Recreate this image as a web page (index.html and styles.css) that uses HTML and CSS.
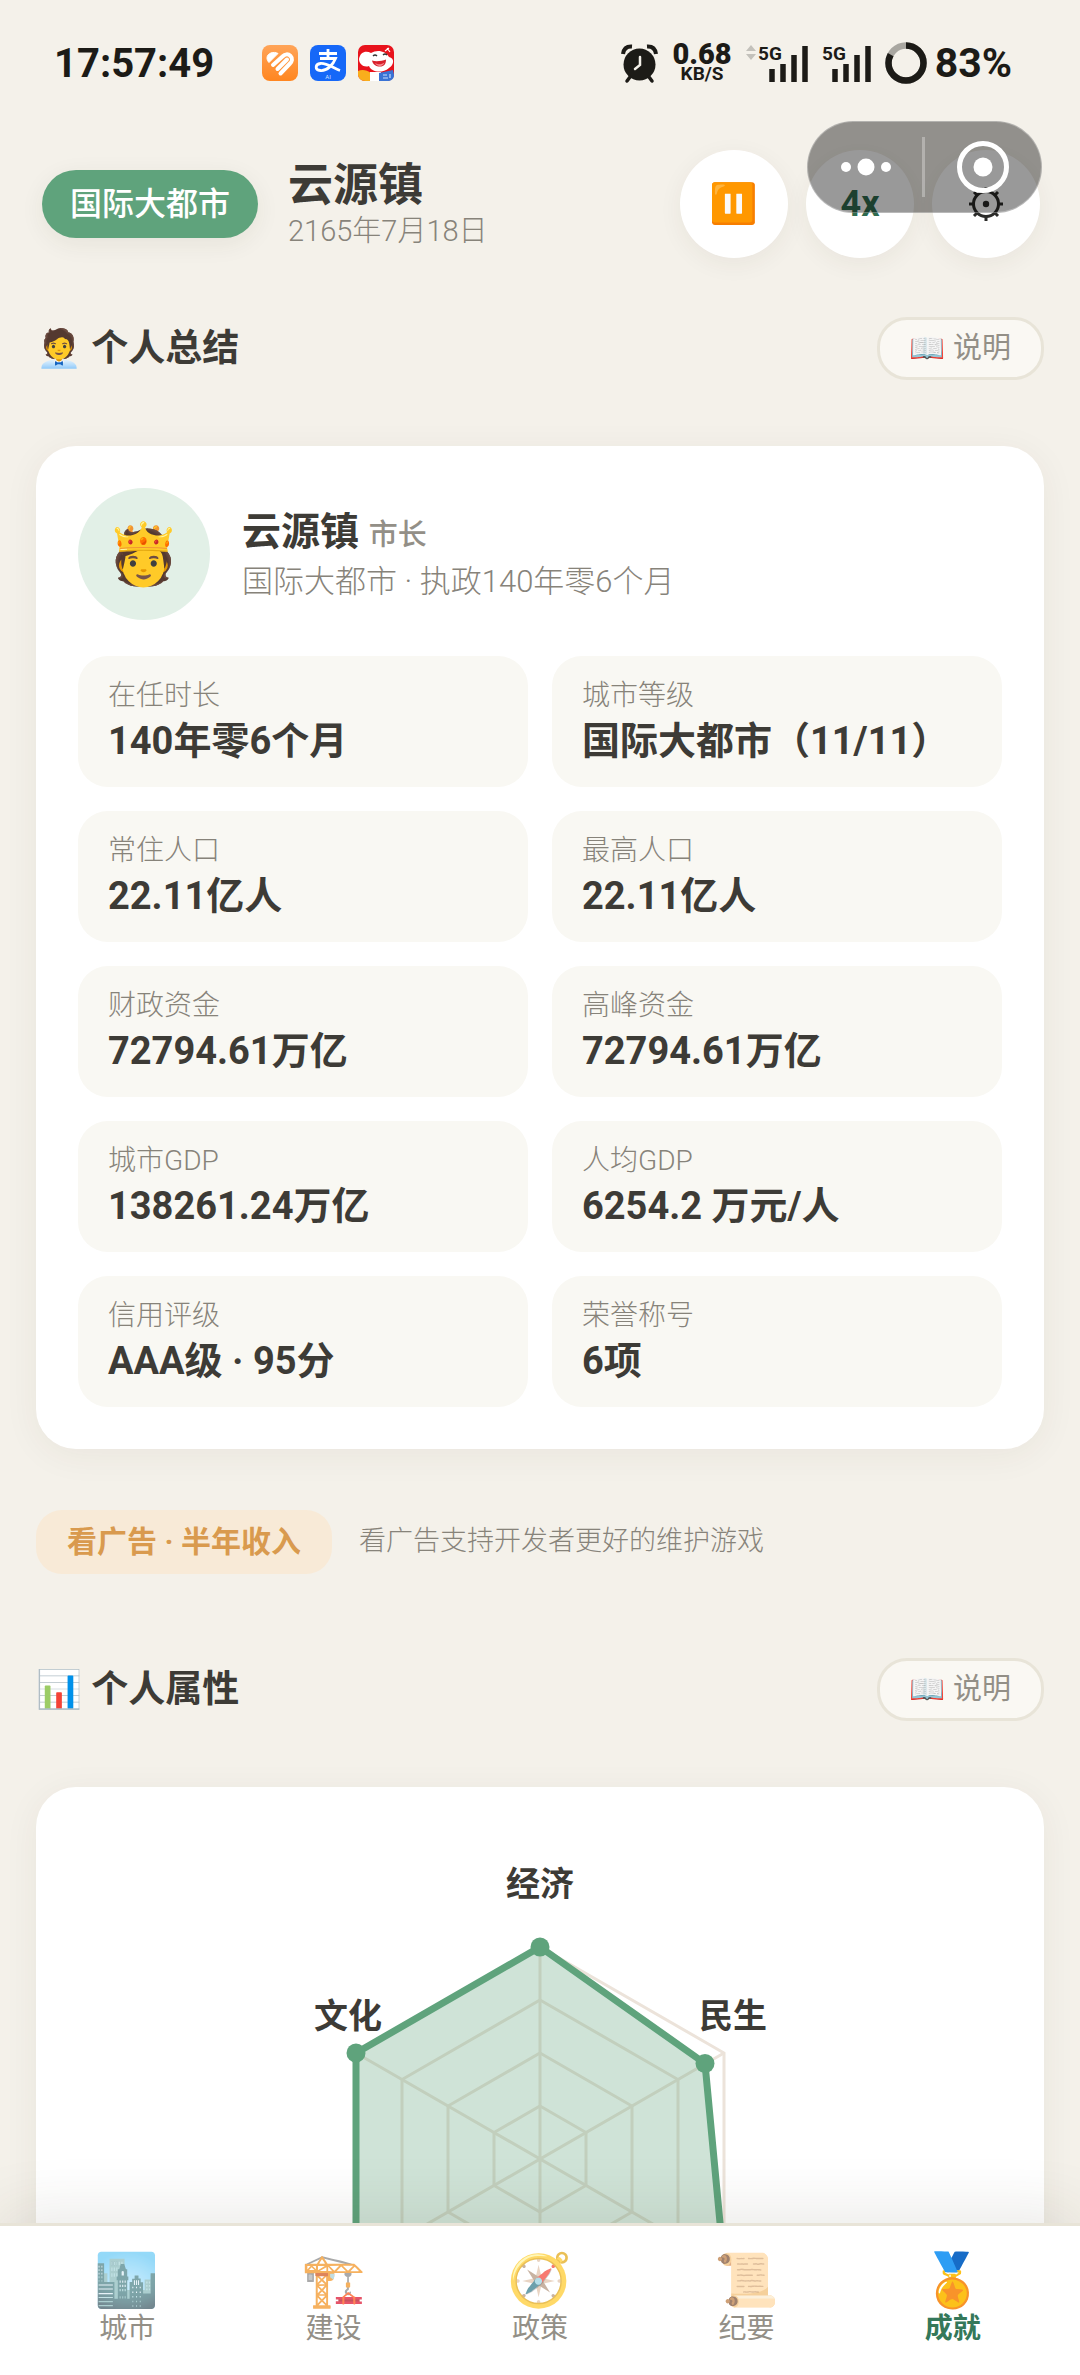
FILE: index.html
```html
<!DOCTYPE html>
<html lang="zh-CN">
<head>
<meta charset="utf-8">
<meta name="viewport" content="width=device-width, initial-scale=1">
<title>云源镇</title>
<link rel="stylesheet" href="styles.css">
</head>
<body>
<div class="status">
  <time class="status-time">17:57:49</time>
  <div class="status-apps">
    <svg class="app-icon" viewBox="0 0 36 36" aria-hidden="true">
      <defs><linearGradient id="orange" x1="0" y1="0" x2="0" y2="1"><stop offset="0" stop-color="#ffa458"/><stop offset="1" stop-color="#ff8620"/></linearGradient></defs>
      <rect width="36" height="36" rx="8" fill="url(#orange)"/>
      <path d="M7 17.500 L16 8.500 C12 6 5 8 5 13 C5 15 6 16.500 7 17.500Z" fill="#fff" stroke="#fff" stroke-linejoin="round"/>
      <path d="M11 20 L20.500 11.500 C23 9 26 8.500 28.500 11 C31 13.500 30 16.500 28 18.500 L18.500 28.500 M15.500 24 L25 14.500" fill="none" stroke="#fff" stroke-width="4" stroke-linecap="round" stroke-linejoin="round"/>
    </svg>
    <svg class="app-icon" viewBox="0 0 36 36" aria-hidden="true">
      <rect width="36" height="36" rx="8" fill="#1668f8"/>
      <path d="M9 8.500 H27 M18 4 V13.500 M10 13.500 H25.500 C23 20 17 26 10.500 25.500 C4.500 25 5 19 10.500 18.500 C17 18 23 23 30 25.500" fill="none" stroke="#fff" stroke-width="2.800"/>
      <text x="18" y="34" class="app-tag">AI</text>
    </svg>
    <svg class="app-icon" viewBox="0 0 36 36" aria-hidden="true">
      <rect width="36" height="36" rx="7" fill="#e8131c"/>
      <path d="M1 14 C2 7 8 5 13 8 C19 4 28 6 31 12 C37 13 36 20 31 23 C24 29 13 27 11 21 C6 23 1 19 1 14Z" fill="#fff"/>
      <path d="M14 15.500 C18 17 24 16 28 14.500 C28 19 26 21.500 22 21.500 C18 21.500 15 19.500 14 15.500Z" fill="#d8202c"/>
      <path d="M17 18 C20 20 24 19.500 26.500 17.500 C25 22 19 22 17 18Z" fill="#f78b91"/>
      <path d="M15 11 q2 -2 4 0 M25 10 q2 -2 4 0" fill="none" stroke="#333" stroke-width="1.400"/>
      <path d="M27 6 l4 -3 M29 3 l3 4" stroke="#fff" stroke-width="1.200"/>
      <path d="M0 26 C4 24 9 25 13 28 V36 H7 C3 36 0 33 0 29Z" fill="#f9ae1c"/>
      <path d="M12 27 H23 V36 H12Z" fill="#fff"/>
      <path d="M21 28 L35 25 L36 30 C36 34 33 36 29 36 H21Z" fill="#3973d5"/>
      <path d="M25 30 h4 M25 33 h5 M32 29 v4" stroke="#c8ddff" stroke-width="1.200"/>
    </svg>
  </div>
  <div class="status-right">
    <svg class="alarm" viewBox="0 0 37 38" aria-hidden="true">
      <circle cx="18.500" cy="20.500" r="16" fill="#1c1b17"/>
      <path d="M2 10 Q3 2 11 2.500 M35 10 Q34 2 26 2.500" fill="none" stroke="#1c1b17" stroke-width="4"/>
      <path d="M9 33 l-3 4 M28 33 l3 4" stroke="#1c1b17" stroke-width="3.500" stroke-linecap="round"/>
      <path d="M19 13 V21 L14 25" fill="none" stroke="#f4f1ea" stroke-width="2.500" stroke-linecap="round"/>
    </svg>
    <div class="speed"><b>0.68</b><span>KB/S</span></div>
    <svg class="signal signal-wide" viewBox="0 0 62 38" aria-hidden="true">
      <path d="M0 7 L5 1 L10 7Z M0 10 L5 16 L10 10Z" fill="#c3c1bb"/>
      <text x="12" y="16" class="net">5G</text>
      <path d="M26 25V38 M37 20V38 M48 11V38 M59 2V38" stroke="#1c1b17" stroke-width="5.500"/>
    </svg>
    <svg class="signal" viewBox="0 0 49 38" aria-hidden="true">
      <text x="0" y="16" class="net">5G</text>
      <path d="M13 25V38 M24 20V38 M35 11V38 M46 2V38" stroke="#1c1b17" stroke-width="5.500"/>
    </svg>
    <div class="battery">
      <svg viewBox="0 0 42 42" aria-hidden="true">
        <circle cx="21" cy="21" r="17.500" fill="none" stroke="#a9a7a1" stroke-width="6.500"/>
        <circle cx="21" cy="21" r="17.500" fill="none" stroke="#1c1b17" stroke-width="6.500" pathLength="100" stroke-dasharray="83 17" transform="rotate(-90 21 21)"/>
      </svg>
      <span>83%</span>
    </div>
  </div>
</div>

<header class="header">
  <span class="badge">国际大都市</span>
  <div class="place">
    <h1>云源镇</h1>
    <p>2165年7月18日</p>
  </div>
  <div class="controls">
    <button class="round" type="button" aria-label="暂停">⏸️</button>
    <button class="round speed-btn" type="button">4x</button>
    <button class="round" type="button" aria-label="设置">
      <svg class="gear" viewBox="0 0 36 36" aria-hidden="true">
        <g fill="none" stroke="#2b2b29" stroke-width="3">
          <circle cx="18" cy="18" r="12.500"/>
          <path d="M18 1V6 M18 30V35 M1 18H6 M30 18H35 M6 6L9.500 9.500 M26.500 26.500L30 30 M30 6L26.500 9.500 M9.500 26.500L6 30"/>
        </g>
        <circle cx="18" cy="18" r="3.200" fill="#2b2b29"/>
      </svg>
    </button>
  </div>
  <div class="capsule">
    <button type="button" aria-label="更多"><svg viewBox="0 0 52 52" aria-hidden="true"><g fill="#fff"><circle cx="6" cy="26" r="5"/><circle cx="26" cy="26" r="8.500"/><circle cx="46" cy="26" r="5"/></g></svg></button>
    <button type="button" aria-label="关闭"><svg viewBox="0 0 52 52" aria-hidden="true"><circle cx="26" cy="26" r="23.500" fill="none" stroke="#fff" stroke-width="5"/><circle cx="26" cy="26" r="9.500" fill="#fff"/></svg></button>
  </div>
</header>

<main class="content">
  <section class="section">
    <div class="section-head">
      <h2>🧑‍💼 个人总结</h2>
      <button class="help" type="button">📖 说明</button>
    </div>
    <div class="card">
      <div class="profile">
        <div class="avatar">🫅</div>
        <div>
          <h3>云源镇 <small>市长</small></h3>
          <p>国际大都市 · 执政140年零6个月</p>
        </div>
      </div>
      <dl class="stats">
        <div><dt>在任时长</dt><dd>140年零6个月</dd></div>
        <div><dt>城市等级</dt><dd>国际大都市（11/11）</dd></div>
        <div><dt>常住人口</dt><dd>22.11亿人</dd></div>
        <div><dt>最高人口</dt><dd>22.11亿人</dd></div>
        <div><dt>财政资金</dt><dd>72794.61万亿</dd></div>
        <div><dt>高峰资金</dt><dd>72794.61万亿</dd></div>
        <div><dt>城市GDP</dt><dd>138261.24万亿</dd></div>
        <div><dt>人均GDP</dt><dd>6254.2 万元/人</dd></div>
        <div><dt>信用评级</dt><dd>AAA级 · 95分</dd></div>
        <div><dt>荣誉称号</dt><dd>6项</dd></div>
      </dl>
    </div>
    <div class="promo">
      <button class="ad" type="button">看广告 · 半年收入</button>
      <span>看广告支持开发者更好的维护游戏</span>
    </div>
  </section>

  <section class="section">
    <div class="section-head">
      <h2>📊 个人属性</h2>
      <button class="help" type="button">📖 说明</button>
    </div>
    <div class="card card-chart">
      <svg class="radar" viewBox="-270 -330 540 600" role="img" aria-label="个人属性雷达图">
        <g class="grid">
          <path d="M0 -212 L184 -106 V106 L0 212 L-184 106 V-106Z"/>
          <path d="M0 -159 L138 -79.500 V79.500 L0 159 L-138 79.500 V-79.500Z"/>
          <path d="M0 -106 L92 -53 V53 L0 106 L-92 53 V-53Z"/>
          <path d="M0 -53 L46 -26.500 V26.500 L0 53 L-46 26.500 V-26.500Z"/>
          <path d="M0 -212V212 M184 -106L-184 106 M-184 -106L184 106"/>
        </g>
        <path class="area" d="M0 -212 L165 -95.500 L184 106 L0 212 L-184 106 V-106Z"/>
        <g class="dots"><circle cy="-212" r="9.500"/><circle cx="165" cy="-95.500" r="9.500"/><circle cx="-184" cy="-106" r="9.500"/></g>
        <g class="axis"><text y="-263">经济</text><text x="193" y="-131">民生</text><text x="-192" y="-131">文化</text></g>
      </svg>
    </div>
  </section>
</main>

<nav class="tabs">
  <a href="#city"><span>🏙️</span>城市</a>
  <a href="#build"><span>🏗️</span>建设</a>
  <a href="#policy"><span>🧭</span>政策</a>
  <a href="#log"><span>📜</span>纪要</a>
  <a href="#honor" class="active" aria-current="page"><span>🏅</span>成就</a>
</nav>
</body>
</html>
```

FILE: styles.css
```css
* { box-sizing: border-box; }

body {
  margin: 0;
  height: 100vh;
  display: flex;
  flex-direction: column;
  overflow: hidden;
  background: #f4f1ea;
  color: #3d3b36;
  font-family: Roboto, "Noto Sans CJK SC", "Noto Color Emoji", sans-serif;
}

h1, h2, h3, p, dl, dd { margin: 0; }
svg { display: block; overflow: visible; }

button {
  margin: 0;
  padding: 0;
  border: 0;
  background: none;
  color: inherit;
  font: inherit;
}

/* Status bar */
.status {
  flex: none;
  height: 126px;
  padding: 0 68px 0 54px;
  display: flex;
  align-items: center;
  color: #1c1b17;
}
.status-time { font-size: 40px; font-weight: 700; }
.status-apps { display: flex; gap: 12px; margin-left: 48px; }
.app-icon { width: 36px; height: 36px; }
.app-tag { font-size: 6px; fill: #cfe0ff; text-anchor: middle; }
.status-right { margin-left: auto; display: flex; align-items: center; gap: 14px; }
.alarm { width: 37px; height: 38px; }
.speed { display: flex; flex-direction: column; align-items: center; font-weight: 700; }
.speed b { font-size: 29px; line-height: 22px; }
.speed span { font-size: 19px; line-height: 18px; }
.signal { width: 49px; height: 38px; }
.signal-wide { width: 62px; }
.net { font-size: 19px; font-weight: 700; fill: #1c1b17; }
.battery { display: flex; align-items: center; gap: 8px; font-size: 41px; font-weight: 700; }
.battery svg { width: 42px; height: 42px; }

/* Header */
.header {
  flex: none;
  position: relative;
  padding: 24px 40px 0 42px;
  display: flex;
  align-items: center;
}
.badge {
  padding: 0 28px;
  border-radius: 34px;
  background: #5fa37c;
  color: #fff;
  font-size: 32px;
  font-weight: 500;
  line-height: 68px;
  box-shadow: 0 6px 24px rgba(60, 50, 30, .07);
}
.place { margin-left: 30px; padding-top: 4px; }
.place h1 { font-size: 45px; line-height: 50px; }
.place p { font-size: 29px; line-height: 40px; color: #87837a; font-weight: 300; }
.controls { margin-left: auto; display: flex; gap: 18px; }
.round {
  width: 108px;
  height: 108px;
  display: flex;
  align-items: center;
  justify-content: center;
  border-radius: 50%;
  background: #fff;
  font-size: 39px;
  box-shadow: 0 6px 24px rgba(60, 50, 30, .06);
}
.speed-btn { color: #2f6b4f; font-size: 36px; font-weight: 700; }
.gear { width: 36px; height: 36px; }
.capsule {
  position: absolute;
  top: -5px;
  right: 38px;
  width: 235px;
  height: 92px;
  display: flex;
  align-items: center;
  border: 1px solid rgba(255, 255, 255, .3);
  border-radius: 46px;
  background: rgba(0, 0, 0, .4);
}
.capsule button { flex: 1; display: flex; justify-content: center; }
.capsule button + button::before {
  content: "";
  position: absolute;
  left: 114px;
  top: 15px;
  width: 3px;
  height: 60px;
  background: rgba(255, 255, 255, .3);
}
.capsule svg { width: 52px; height: 52px; }

/* Content */
.content {
  flex: 1;
  min-height: 0;
  overflow: hidden;
  padding: 59px 36px 0;
}
.section + .section { margin-top: 84px; }
.section-head { display: flex; align-items: center; justify-content: space-between; }
.section-head h2 { font-size: 37px; line-height: 63px; }
.help {
  padding: 0 30px;
  border: 3px solid #e8e4d8;
  border-radius: 30px;
  background: #faf8f3;
  color: #938f87;
  font-size: 29px;
  line-height: 57px;
}
.card {
  margin-top: 66px;
  padding: 42px;
  border-radius: 40px;
  background: #fff;
  box-shadow: 0 6px 36px rgba(60, 50, 30, .06);
}
.profile { display: flex; align-items: center; gap: 32px; }
.avatar {
  width: 132px;
  height: 132px;
  display: flex;
  align-items: center;
  justify-content: center;
  border-radius: 50%;
  background: #e2f0e7;
  font-size: 60px;
}
.profile h3 { font-size: 39px; line-height: 52px; }
.profile small { font-size: 29px; font-weight: 500; color: #938f87; }
.profile p { font-size: 31px; line-height: 42px; color: #87837a; font-weight: 300; }

.stats { margin-top: 36px; display: grid; grid-template-columns: 1fr 1fr; gap: 24px; }
.stats > div { padding: 20px 30px; border-radius: 30px; background: #f9f8f3; }
.stats dt { font-size: 28px; line-height: 40px; color: #87837a; font-weight: 300; }
.stats dd { font-size: 38px; line-height: 51px; font-weight: 700; }

.promo { margin-top: 61px; display: flex; align-items: center; gap: 27px; }
.ad {
  padding: 0 31px;
  border-radius: 26px;
  background: #f8ead7;
  color: #d99a4e;
  font-size: 30px;
  font-weight: 700;
  line-height: 64px;
}
.promo span { font-size: 27px; line-height: 40px; padding-bottom: 3px; color: #87837a; font-weight: 300; }

/* Radar chart */
.card-chart { padding: 42px 0; }
.radar { width: 540px; height: 600px; margin: 0 auto; }
.grid path { fill: none; stroke: #ece3da; stroke-width: 3px; }
.area { fill: rgba(95, 163, 124, .3); stroke: #5fa37c; stroke-width: 7px; stroke-linejoin: round; }
.dots { fill: #5fa37c; }
.axis { font-size: 34px; font-weight: 700; fill: #3d3b36; text-anchor: middle; }

/* Bottom tabs */
.tabs {
  flex: none;
  position: relative;
  padding: 22px 24px 30px;
  display: flex;
  border-top: 3px solid #e8e4d8;
  background: #fff;
  box-shadow: 0 -12px 60px rgba(60, 50, 30, .1);
}
.tabs a {
  flex: 1;
  display: flex;
  flex-direction: column;
  align-items: center;
  color: #938f87;
  font-size: 28px;
  line-height: 32px;
  text-decoration: none;
}
.tabs span { font-size: 52px; line-height: 65px; opacity: .7; }
.tabs .active { color: #34785a; font-weight: 700; }
.tabs .active span { opacity: 1; }
```
